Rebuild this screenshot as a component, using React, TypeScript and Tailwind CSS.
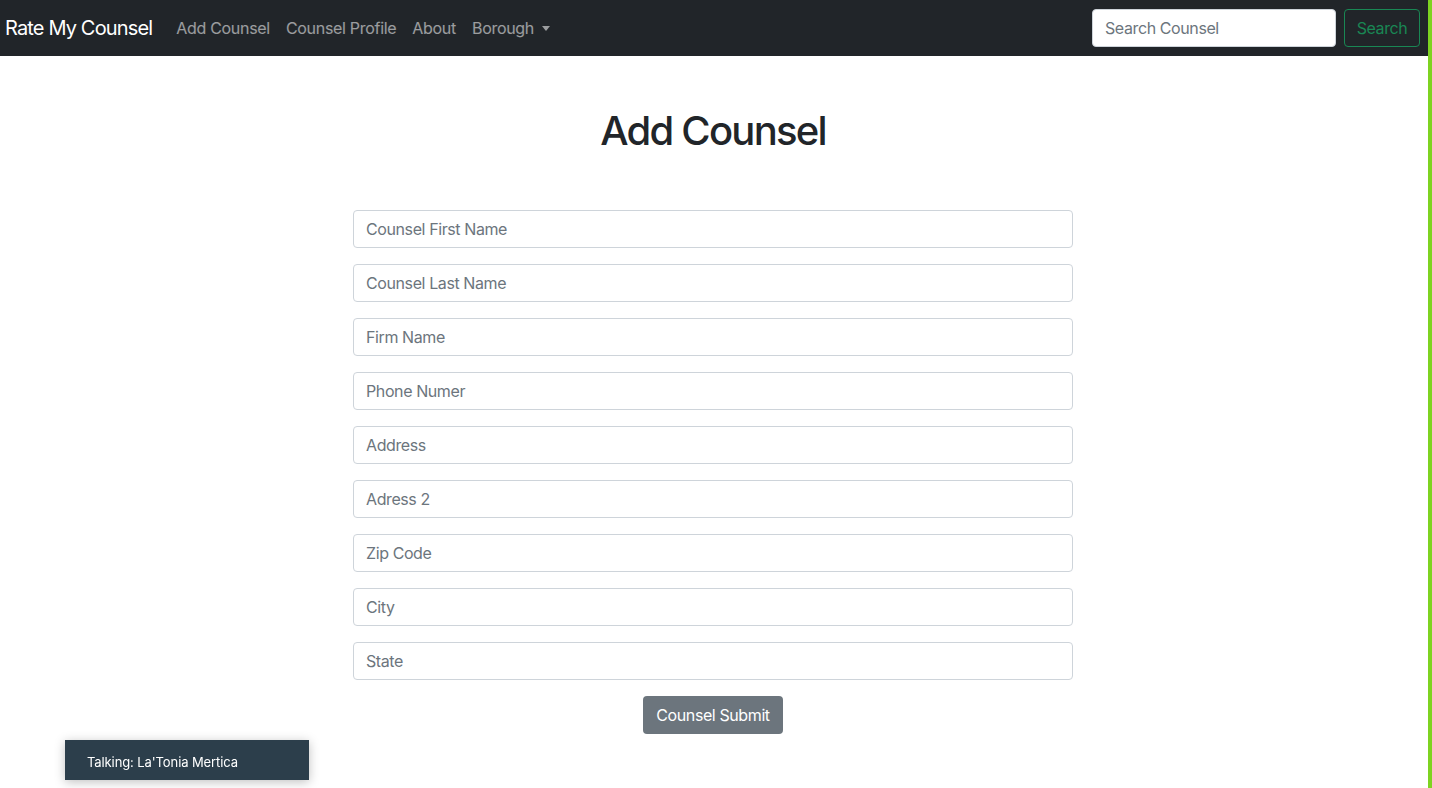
import { useState } from "react";

const fields = [
  "Counsel First Name",
  "Counsel Last Name",
  "Firm Name",
  "Phone Numer",
  "Address",
  "Adress 2",
  "Zip Code",
  "City",
  "State",
];

const NavBar = () => (
  <nav className="h-14 bg-[#212529] flex items-center pl-[5px] pr-2">
    <a className="text-[20px] text-white tracking-[-0.85px] mr-4">Rate My Counsel</a>
    <ul className="flex items-center text-[16px] text-white/55 tracking-[-0.3px]">
      <li className="px-2">Add Counsel</li>
      <li className="px-2">Counsel Profile</li>
      <li className="px-2">About</li>
      <li className="px-2 flex items-center">
        Borough
        <span className="ml-[8px] border-t-[5px] border-t-white/55 border-x-[4px] border-x-transparent" />
      </li>
    </ul>
    <form className="ml-auto flex items-center gap-2">
      <input
        placeholder="Search Counsel"
        className="w-[244px] h-[38px] bg-white rounded px-3 text-[16px] tracking-[-0.4px] placeholder:text-[#6c757d] outline-none border border-[#ced4da]"
      />
      <button
        type="button"
        className="w-[76px] h-[38px] rounded border border-[#198754] text-[#198754] text-[16px] tracking-[-0.4px]"
      >
        Search
      </button>
    </form>
  </nav>
);

const App = () => {
  const [values, setValues] = useState<Record<string, string>>({});

  return (
    <div className="min-h-[788px] flex font-['Inter',sans-serif] text-[#212529]">
      <div className="flex-1 bg-white flex flex-col">
        <NavBar />
        <main className="flex flex-col items-center pr-[2px]">
          <h1 className="mt-[51px] text-[40px] font-medium leading-[1.2] tracking-[-1.75px]">
            Add Counsel
          </h1>
          <form className="mt-[55px] w-[720px] flex flex-col gap-4">
            {fields.map((f) => (
              <input
                key={f}
                placeholder={f}
                value={values[f] ?? ""}
                onChange={(e) => setValues({ ...values, [f]: e.target.value })}
                className="h-[38px] w-full rounded border border-[#ced4da] px-3 text-[16px] tracking-[-0.4px] placeholder:text-[#6c757d] outline-none"
              />
            ))}
          </form>
          <button
            type="button"
            className="mt-4 h-[38px] w-[140px] rounded bg-[#6c757d] text-white text-[16px] tracking-[-0.4px]"
          >
            Counsel Submit
          </button>
        </main>
      </div>
      <div className="w-1 bg-[#7ed321]" />
      <div className="fixed left-[65px] top-[740px] w-[244px] h-10 bg-[#2c3e4b] text-white text-[13px] tracking-[-0.1px] flex items-center pt-[5px] pl-[22px] shadow-[0_2px_10px_rgba(0,0,0,0.25)]">
        Talking: La'Tonia Mertica
      </div>
    </div>
  );
};

export default App;
